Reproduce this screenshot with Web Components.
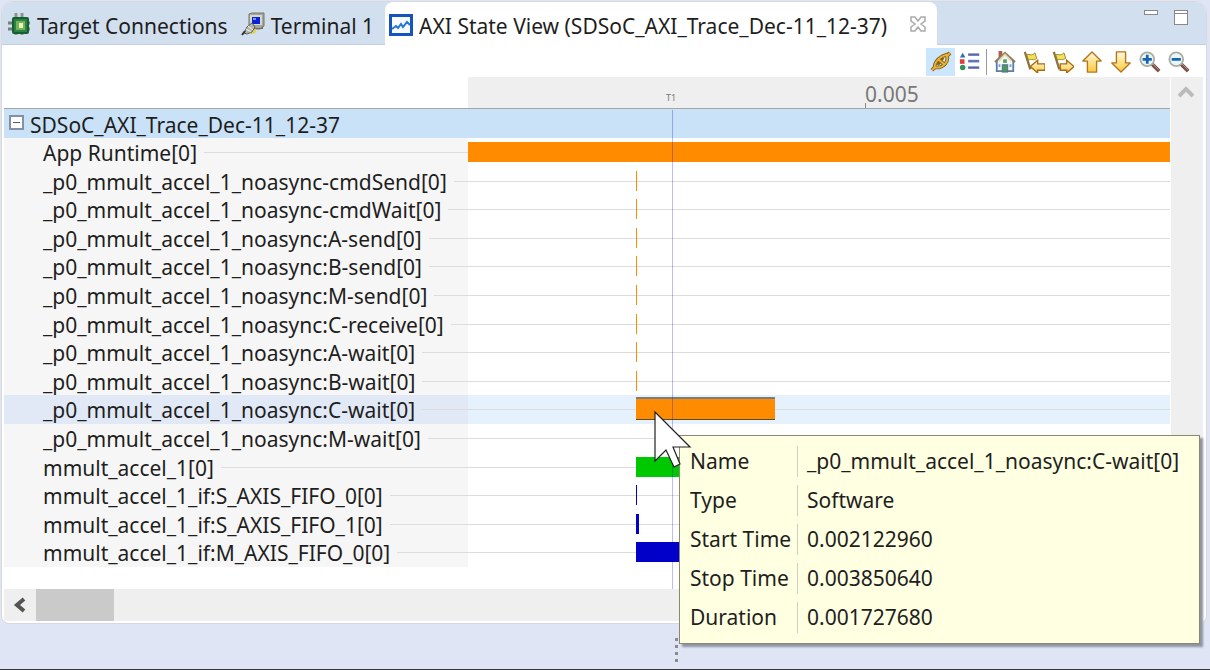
<!DOCTYPE html>
<html lang="en">
<head>
<meta charset="utf-8">
<title>AXI State View</title>
<style>
html, body { margin: 0; }
body { min-height: 100vh; display: flex; font: 21px/28px "Noto Sans", "Open Sans", sans-serif; color: #1e1e1e; background: #e0e5f5; }
</style>
</head>
<body>
<axi-workbench>
  <view-tab slot="tabs"><view-icon slot="icon" name="chip"></view-icon>Target Connections</view-tab>
  <view-tab slot="tabs"><view-icon slot="icon" name="terminal"></view-icon>Terminal 1</view-tab>
  <view-tab slot="tabs" active><view-icon slot="icon" name="chart"></view-icon>AXI State View (SDSoC_AXI_Trace_Dec-11_12-37)</view-tab>
  <tool-button slot="tools" label="Align views" icon="link" pressed></tool-button>
  <tool-button slot="tools" label="Show legend" icon="legend"></tool-button>
  <tool-divider slot="tools"></tool-divider>
  <tool-button slot="tools" label="Reset time scale" icon="home"></tool-button>
  <tool-button slot="tools" label="Previous event" icon="prev"></tool-button>
  <tool-button slot="tools" label="Next event" icon="next"></tool-button>
  <tool-button slot="tools" label="Previous entry" icon="up"></tool-button>
  <tool-button slot="tools" label="Next entry" icon="down"></tool-button>
  <tool-button slot="tools" label="Zoom in" icon="zoomin"></tool-button>
  <tool-button slot="tools" label="Zoom out" icon="zoomout"></tool-button>
  <state-chart></state-chart>
  <event-tooltip slot="overlay"></event-tooltip>
</axi-workbench>

<script>
const gold = `<linearGradient id="g" x1="0" y1="0" x2="0" y2="1"><stop offset="0" stop-color="#fffbe0"/><stop offset="1" stop-color="#ffc83c"/></linearGradient>`;
const lens = `<path d="M14 14l8 8" stroke="#7a5048" stroke-width="4"/><path d="M14.500 13.500l7 7" stroke="#b99a92" stroke-width="1"/><circle cx="9" cy="9" r="7.500" fill="#e9f6fc" stroke="#a9aea0" stroke-width="2"/>`;
const flag = `<path d="M2 1l6 19" stroke="#8d7440" stroke-width="2.500"/><path d="M4 4c4-1 5 2 9-2l2 6c-4 3-6 0-9 2z" fill="#f6e04e" stroke="#8d7f35"/>`;
const ICONS = {
  chip: `<path d="M9 1v6M15 1v6M9 18v5M15 18v5" stroke="#8d9391" stroke-width="3"/><path d="M1 11h22M1 17h22" stroke="#777f7c" stroke-width="3"/><rect x="6" y="6" width="15" height="15" rx="1" fill="#2b8248" stroke="#15602f" stroke-width="2"/><rect x="9" y="9" width="9" height="9" fill="#72b455"/><rect x="12" y="11" width="4" height="5" fill="#f1f3bd"/>`,
  terminal: `<path d="M8 2l3-1h12v13l-4 3H8z" fill="#a5a79a" stroke="#777668"/><rect x="9" y="3" width="12" height="10" fill="#d7d7cc"/><rect x="11" y="5" width="8" height="7" fill="#0a22dd"/><path d="M12 6h3v2h-3z" fill="#759bff"/><path d="M8 16h12l2-2v3H9z" fill="#6f6c5c"/><path d="M14 17c1 5-5 5-6 2" fill="none" stroke="#e3d34a" stroke-width="2"/><path d="M3 21l3-6 5-4 3 4-3 5-5 2z" fill="#b6b7ae" stroke="#59594f"/><path d="M5 17l5 3M7 14l5 4" stroke="#f5f5ee"/><path d="M1 23l3-4" stroke="#333" stroke-width="2"/>`,
  chart: `<rect x="1.500" y="2.500" width="21" height="19" fill="#f8fbff" stroke="#1554bd" stroke-width="3"/><path d="M3 16l4-3 2 2 3-4 2 3 4-5 3 3" fill="none" stroke="#2377d8" stroke-width="2"/>`,
  link: `<g fill="none" stroke="#8b6314" stroke-width="4"><path d="M2 21l4-4M18 6l4-4"/><path d="M5 18c0-6 3-9 8-12l5-2 1 4c0 5-5 9-9 10z"/><path d="M8 8l9 8M14 7l-6 8"/></g><g fill="none" stroke="#e5b43c" stroke-width="2"><path d="M2 21l4-4M18 6l4-4"/><path d="M5 18c0-6 3-9 8-12l5-2 1 4c0 5-5 9-9 10z"/><path d="M9 9l7 6"/></g>`,
  legend: `<path d="M4 2l3 5H1z" fill="#2871b8"/><rect x="1" y="9" width="5" height="5" fill="#e33c3c"/><circle cx="4" cy="18" r="3" fill="#379158"/><path d="M10 4h12M10 11h12M10 18h12" stroke="#7889c4" stroke-width="3"/><path d="M10 4h12M10 11h12M10 18h12" stroke="#4a62a6"/>`,
  home: `<path d="M5 0h4v8H5z" fill="#ae5c45"/><path d="M3 11v11h18V11l-9-8z" fill="#f7fbff" stroke="#5f7ca5" stroke-width="2"/><path d="M1 12L12 2l11 10" fill="none" stroke="#917c5c" stroke-width="2"/><path d="M5 11l7-7 7 7" fill="none" stroke="#e6d9b4" stroke-width="2"/><rect x="10" y="9" width="4" height="4" fill="#55a255"/><rect x="9" y="15" width="6" height="8" fill="#4c9955" stroke="#4f6c9b"/><path d="M5 16h2M17 16h2" stroke="#79a0cb" stroke-width="3"/>`,
  prev: gold + flag + `<path d="M8 17l8-7v4h8v7h-8v3z" fill="url(#g)" stroke="#a96a10" stroke-width="1.500"/>`,
  next: gold + flag + `<path d="M24 17l-8-7v4H9v7h7v3z" fill="url(#g)" stroke="#a96a10" stroke-width="1.500"/>`,
  up: gold + `<path d="M12 1l10 10h-5v12H7V11H2z" fill="url(#g)" stroke="#b5761a" stroke-width="1.500" stroke-linejoin="round"/>`,
  down: gold + `<path d="M12 23L2 13h5V1h10v12h5z" fill="url(#g)" stroke="#b5761a" stroke-width="1.500" stroke-linejoin="round"/>`,
  zoomin: lens + `<path d="M9 4v10M4 9h10" stroke="#1765aa" stroke-width="3"/>`,
  zoomout: lens + `<path d="M4 9h10" stroke="#1765aa" stroke-width="3"/>`
};

class Base extends HTMLElement {
  connectedCallback() {
    if (this.shadowRoot) return;
    this.attachShadow({ mode: "open" }).innerHTML = `<style>*{box-sizing:border-box}button{font:inherit;color:inherit;border:0;padding:0;background:none}${this.css()}</style>${this.html()}`;
  }
  html() { return ""; }
}

customElements.define("view-icon", class extends Base {
  css() { return `:host{display:block;width:24px;height:24px}svg{display:block;width:100%;height:100%}`; }
  html() { return `<svg viewBox="0 0 24 24" fill="none" aria-hidden="true">${ICONS[this.getAttribute("name")]}</svg>`; }
});

customElements.define("tool-divider", class extends Base {
  css() { return `:host{width:1px;height:26px;background:#999;margin:0 3px 0 2px}`; }
});

customElements.define("tool-button", class extends Base {
  css() { return `:host{display:block}button{display:grid;place-items:center;width:29px;height:28px}:host([pressed]) button{background:#cce6ff}view-icon{width:22px;height:22px}`; }
  html() { return `<button aria-label="${this.getAttribute("label")}" aria-pressed="${this.hasAttribute("pressed")}"><view-icon name="${this.getAttribute("icon")}"></view-icon></button>`; }
});

customElements.define("view-tab", class extends Base {
  css() { return `
    :host{display:flex;align-items:center;padding:5px 8px 0 5px;white-space:nowrap}
    :host([active]){background:#fff;border-radius:8px 8px 0 0;padding:5px 10px 0 4px;margin:0 0 -1px 3px}
    .tab{display:flex;align-items:center;gap:6px}
    .close{display:none;margin-left:22px;width:18px;height:18px}
    :host([active]) .close{display:block;margin-bottom:4px}svg{display:block;width:18px;height:18px}
    ::slotted(view-icon){margin-bottom:3px}`; }
  html() { return `<button class="tab" role="tab"><slot name="icon"></slot><span><slot></slot></span></button>
    <button class="close" aria-label="Close"><svg viewBox="0 0 18 18"><path d="M2 2h4l3 4 3-4h4v4l-4 3 4 3v4h-4l-3-4-3 4H2v-4l4-3-4-3z" fill="#fff" stroke="#aaa" stroke-width="1.500"/></svg></button>`; }
});

customElements.define("axi-workbench", class extends Base {
  css() { return `
    :host{position:relative;flex:1;display:flex;flex-direction:column;min-width:0;border-bottom:1px solid #33343c}
    .panel{flex:1;display:flex;flex-direction:column;margin:1px 3px 0 1px;border:1px solid #d8d9df;border-radius:12px 12px 8px 8px;background:#fff;overflow:hidden}
    .tabs{display:flex;height:43px;background:#d1dfee;border-bottom:1px solid #c3d0e4}
    .window{display:flex;gap:14px;margin:6px 17px 0 auto;height:18px}
    .window svg{display:block;width:16px;height:18px}
    .tools{display:flex;height:32px;align-items:center;justify-content:flex-end;padding:2px 13px 0 0}
    .sash{height:45px;display:flex;align-items:center;justify-content:center;padding:7px 0 0 142px}
    .sash i{width:3px;height:24px;background:repeating-linear-gradient(#8b8b8b 0 3px,transparent 3px 7px)}`; }
  html() { return `
    <section class="panel">
      <div class="tabs" role="tablist"><slot name="tabs"></slot>
        <div class="window">
          <button aria-label="Minimize"><svg viewBox="0 0 16 18"><rect x="1.500" y="2.500" width="13" height="4" fill="#fff" stroke="#888"/></svg></button>
          <button aria-label="Maximize"><svg viewBox="0 0 16 18"><rect x="1.500" y="2.500" width="13" height="14" fill="#fff" stroke="#888"/><path d="M1 5.500h14" stroke="#888"/></svg></button>
        </div>
      </div>
      <div class="tools" role="toolbar"><slot name="tools"></slot></div>
      <slot></slot>
    </section>
    <div class="sash"><i></i></div>
    <slot name="overlay"></slot>`; }
});

const PRE = "_p0_mmult_accel_1_noasync";
const ROWS = [
  ["App Runtime[0]", "full"],
  ...["-cmdSend", "-cmdWait", ":A-send", ":B-send", ":M-send", ":C-receive", ":A-wait", ":B-wait"].map(n => [PRE + n + "[0]", "tick"]),
  [PRE + ":C-wait[0]", "wait"],
  [PRE + ":M-wait[0]", ""],
  ["mmult_accel_1[0]", "accel"],
  ["mmult_accel_1_if:S_AXIS_FIFO_0[0]", "tick blue"],
  ["mmult_accel_1_if:S_AXIS_FIFO_1[0]", "pulse blue"],
  ["mmult_accel_1_if:M_AXIS_FIFO_0[0]", "blue"]
];

customElements.define("state-row", class extends Base {
  css() { return `
    :host{display:grid;grid-template-columns:464px 1fr;min-height:0;--line:linear-gradient(#dcdcdc,#dcdcdc) no-repeat 0 14px / 100% 1px}
    .name{display:flex;gap:7px;padding-left:39px;background:#f6f6f6;white-space:nowrap;min-height:0}
    .name span{padding-top:1px;height:28px}
    .name i{flex:1;background:var(--line)}
    .track{display:grid;grid-template-columns:168fr 139fr 395fr;background:var(--line);min-height:0}
    b{grid-column:2;height:20px;margin-top:4px;background:#ff8c00}
    .full b{grid-column:1/-1}
    .tick b{width:1px}
    .pulse b{width:3px}
    .accel b{background:#00c800}
    .blue b{background:#0000c8}
    .none b{display:none}
    .wait b{height:23px;margin-top:2px;border-top:2px solid #7c7c7c;border-bottom:1px solid #5c4a28}
    :host([selected]) .name{background:#e1e9f6}
    :host([selected]){background:#e6f1fe}`; }
  html() { return `<div class="name"><span>${this.getAttribute("name")}</span><i></i></div><div class="track ${this.getAttribute("kind") || "none"}"><b></b></div>`; }
});

customElements.define("state-chart", class extends Base {
  css() { return `
    :host{flex:1;display:flex;flex-direction:column;margin:0 3px 2px 2px}
    .main{flex:1;display:flex}
    .chart{position:relative;flex:1;display:flex;flex-direction:column;min-width:0}
    .head{display:grid;grid-template-columns:464px 1fr;height:32px;border-bottom:1px solid #a5a5a5;flex:none}
    .axis{display:grid;grid-template-columns:198fr 199fr 305fr;background:#efefef;color:#787878}
    .mark{grid-column:2;font-size:9px;line-height:12px;padding-top:15px}
    .axis time{grid-column:3;line-height:34px;height:31px;background:linear-gradient(#888,#888) no-repeat 0 100% / 1px 5px}
    .root{display:flex;align-items:center;gap:6px;height:29px;padding-left:5px;background:#cae2f7;flex:none}
    .root span{padding-top:3px}
    .root button{display:block;margin-bottom:2px}
    .root svg{display:block;width:15px;height:15px}
    .rows{flex:1;display:grid;grid-template-rows:repeat(15,1fr)}
    .gap{height:22px}
    .cursor{position:absolute;inset:33px 0 0 464px;display:grid;grid-template-columns:204fr 498fr;pointer-events:none}
    .cursor i{grid-column:2;width:1px;background:#0000ff44}
    .vbar{width:32px;margin-left:1px;background:#efefef;display:flex;justify-content:center;align-items:flex-start;padding:8px 2px 0 0}
    .vbar svg{display:block;width:16px;height:14px}
    .hbar{height:32px;background:#efefef;display:flex;align-items:center}
    .hbar button{width:32px;height:32px;display:grid;place-items:center}
    .hbar svg{width:14px;height:16px;display:block}
    .thumb{width:78px;height:32px;background:#cacaca}`; }
  html() { return `
    <div class="main">
      <div class="chart">
        <div class="head"><span></span><div class="axis"><span class="mark">T1</span><time>0.005</time></div></div>
        <div class="root"><button aria-label="Collapse"><svg viewBox="0 0 15 15"><path d="M1 1h13v13H1z" fill="#fff" stroke="#8490a4" stroke-width="2"/><path d="M4 7.500h7" stroke="#555a78"/></svg></button><span>SDSoC_AXI_Trace_Dec-11_12-37</span></div>
        <div class="rows">${ROWS.map(([n, k]) => `<state-row name="${n}" kind="${k}"${k === "wait" ? " selected" : ""}></state-row>`).join("")}</div>
        <div class="gap"></div>
        <div class="cursor"><i></i></div>
      </div>
      <div class="vbar"><button aria-label="Scroll up"><svg viewBox="0 0 16 14"><path d="M1 11l7-7 7 7" fill="none" stroke="#bbb" stroke-width="4"/></svg></button></div>
    </div>
    <div class="hbar"><button aria-label="Scroll left"><svg viewBox="0 0 14 16"><path d="M11 2L4 8l7 6" fill="none" stroke="#555" stroke-width="4"/></svg></button><div class="thumb"></div></div>`; }
});

customElements.define("event-tooltip", class extends Base {
  css() { return `
    :host{position:absolute;right:10px;bottom:25px;width:521px;height:209px;background:#ffffe1;border:1px solid #888878;box-shadow:3px 3px 2px #8f93a0;box-sizing:border-box;padding:6px 8px}
    table{border-collapse:separate;border-spacing:0 8px;margin:-4px 0 0}
    th,td{height:31px;padding:0 0 0 2px;font-weight:400;text-align:left;white-space:nowrap;line-height:31px}
    th{width:110px;border-right:1px solid #cfcfc4}
    td{padding-left:9px}
    svg{position:absolute;left:-27px;top:-26px;width:40px;height:60px}`; }
  html() { return `
    <table>${[["Name", PRE + ":C-wait[0]"], ["Type", "Software"], ["Start Time", "0.002122960"], ["Stop Time", "0.003850640"], ["Duration", "0.001727680"]].map(([a, b]) => `<tr><th scope="row">${a}</th><td>${b}</td></tr>`).join("")}</table>
    <svg viewBox="0 0 40 60" aria-hidden="true"><path d="M2 2v49l11-11 8 17 6-3-7-17h17z" fill="#fff" stroke="#222" stroke-width="1.200"/></svg>`; }
});
</script>
</body>
</html>
